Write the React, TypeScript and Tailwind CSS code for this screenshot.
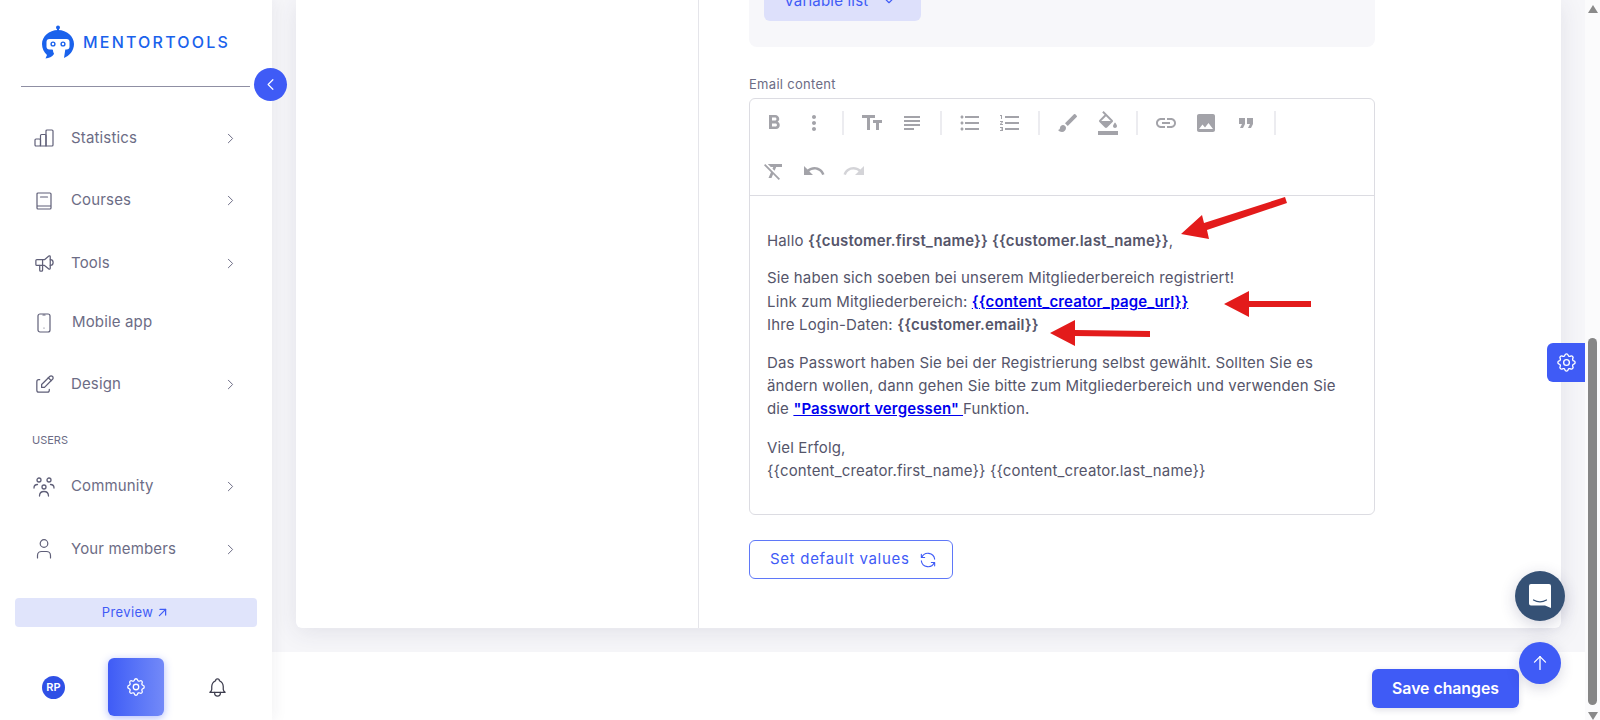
import type { ReactNode } from 'react';
import {
  MdBrush,
  MdFormatBold,
  MdFormatClear,
  MdFormatColorFill,
  MdFormatListBulleted,
  MdFormatListNumbered,
  MdFormatQuote,
  MdImage,
  MdLink,
  MdMoreVert,
  MdRedo,
  MdSubject,
  MdUndo,
} from 'react-icons/md';
import {
  TbArrowUp,
  TbArrowUpRight,
  TbBell,
  TbChevronDown,
  TbChevronLeft,
  TbChevronRight,
  TbDeviceMobile,
  TbEdit,
  TbRefresh,
  TbSettings,
  TbSpeakerphone,
} from 'react-icons/tb';

function Logo() {
  return (
    <svg width="34" height="34" viewBox="0 0 34 34" fill="none">
      <circle cx="17" cy="2.500" r="2" fill="#1a62ec" />
      <path d="M16 3h2v4h-2z" fill="#1a62ec" />
      <path
        d="M17 5C8 5 1 11.500 1 19c0 4.500 2 8.500 5 11l-1.500 3.500c3.500-.3 6.500-1.600 8.500-4.500l-1.500-6h13L23 33c5-2 10-7 10-14C33 11.500 26 5 17 5z"
        fill="#1a62ec"
      />
      <rect x="5.500" y="14" width="23" height="10.500" rx="3" fill="#fff" />
      <path d="M11.500 24h11l-2 5.500h-7z" fill="#fff" />
      <circle cx="12" cy="19" r="1.900" stroke="#1a62ec" strokeWidth="1.400" />
      <circle cx="22" cy="19" r="1.900" stroke="#1a62ec" strokeWidth="1.400" />
    </svg>
  );
}

function StatsIcon() {
  return (
    <svg width="20" height="18" viewBox="0 0 20 18" fill="none" stroke="currentColor" strokeWidth="1.200" strokeLinejoin="round">
      <rect x="1" y="10" width="5.500" height="7" rx="1" />
      <path d="M6.500 17V6.500a1 1 0 0 1 1-1h3.500a1 1 0 0 1 1 1V17z" />
      <path d="M12 17V2a1 1 0 0 1 1-1h5a1 1 0 0 1 1 1v14a1 1 0 0 1-1 1z" />
    </svg>
  );
}

function BookIcon() {
  return (
    <svg width="16" height="18" viewBox="0 0 16 18" fill="none" stroke="currentColor" strokeWidth="1.200" strokeLinecap="round">
      <path d="M1 14V2a1 1 0 0 1 1-1h12a1 1 0 0 1 1 1v12H1zm0 0v2a1 1 0 0 0 1 1h12a1 1 0 0 0 1-1v-2" />
      <path d="M4.500 5h7" />
    </svg>
  );
}

function CommunityIcon() {
  return (
    <svg width="22" height="20" viewBox="0 0 22 20" fill="none" stroke="currentColor" strokeWidth="1.300" strokeLinecap="round">
      <circle cx="6" cy="3" r="2" />
      <circle cx="16" cy="3" r="2" />
      <circle cx="11" cy="10" r="2" />
      <path d="M1 11c0-2.500 1.500-3.500 3.500-3.500M21 11c0-2.500-1.500-3.500-3.500-3.500" />
      <path d="M6.500 19c0-3 2-4.500 4.500-4.500s4.500 1.500 4.500 4.500" />
    </svg>
  );
}

function MemberIcon() {
  return (
    <svg width="16" height="20" viewBox="0 0 16 20" fill="none" stroke="currentColor" strokeWidth="1.200" strokeLinecap="round">
      <circle cx="8" cy="4.500" r="3.800" />
      <path d="M1.500 19v-2.500c0-2.500 2-4 4-4h5c2 0 4 1.500 4 4V19" />
    </svg>
  );
}

function TextSizeIcon() {
  return (
    <svg width="24" height="24" viewBox="0 0 24 24" fill="currentColor">
      <path d="M2 4v3h5v12h3V7h5V4H2zm11 5v3h3v7h3v-7h3V9h-9z" />
    </svg>
  );
}

function NavItem({ icon, label, height, chevron = true, labelGap = 'ml-[15px]' }: { icon: ReactNode; label: string; height: string; chevron?: boolean; labelGap?: string }) {
  return (
    <div className={`flex items-center pl-[32px] pr-[33px] text-[#6c6c85] ${height}`}>
      <span className="flex w-[24px] justify-center text-[#5f5f78]">{icon}</span>
      <span className={`${labelGap} flex-1 text-[15px] tracking-[0.15px]`}>{label}</span>
      {chevron && <TbChevronRight size={17} strokeWidth={1.4} />}
    </div>
  );
}

function Sidebar() {
  return (
    <aside className="relative z-10 flex h-[720px] w-[272px] shrink-0 flex-col bg-white shadow-[4px_0_12px_rgba(40,40,70,0.05)]">
      <div className="flex h-[86px] items-start pl-[41px] pt-[25px]">
        <Logo />
        <span className="ml-[8px] mt-[8px] text-[16px] font-medium leading-[19px] tracking-[2.2px] text-[#1a62ec]">MENTORTOOLS</span>
      </div>
      <div className="ml-[21px] w-[229px] border-t border-[#8f8fa3]" />
      <div className="mt-[20px] flex flex-col">
        <NavItem icon={<StatsIcon />} label="Statistics" height="h-[62px]" />
        <NavItem icon={<BookIcon />} label="Courses" height="h-[63px]" />
        <NavItem icon={<TbSpeakerphone size={23} strokeWidth={1.3} />} label="Tools" height="h-[62px]" />
        <NavItem icon={<TbDeviceMobile size={24} strokeWidth={1.2} />} label="Mobile app" height="h-[57px]" chevron={false} labelGap="ml-[16px]" />
        <NavItem icon={<TbEdit size={23} strokeWidth={1.3} />} label="Design" height="h-[67px]" />
      </div>
      <div className="mt-[15px] pl-[32px] text-[11px] leading-[14px] text-[#6c6c85]">USERS</div>
      <div className="mt-[8px] flex flex-col">
        <NavItem icon={<CommunityIcon />} label="Community" height="h-[63px]" />
        <NavItem icon={<MemberIcon />} label="Your members" height="h-[62px]" />
      </div>
      <div className="mx-[15px] mt-[18px] flex h-[29px] items-center justify-center gap-[2px] rounded-[4px] bg-[#e0e4fb] text-[13px] tracking-[0.4px] text-[#3f5bf6]">
        Preview <TbArrowUpRight size={15} />
      </div>
      <div className="mt-[31px] flex h-[58px] items-center pl-[42px]">
        <div className="flex h-[23px] w-[23px] items-center justify-center rounded-full bg-[#2f50e6] text-[11px] font-semibold text-white">RP</div>
        <div className="ml-[43px] flex h-[58px] w-[56px] items-center justify-center rounded-[6px] bg-gradient-to-r from-[#3f5bf6] to-[#7389f8] text-white shadow-[0_2px_8px_rgba(63,91,246,0.4)]">
          <TbSettings size={22} strokeWidth={1.4} />
        </div>
        <TbBell size={23} strokeWidth={1.3} className="ml-[42px] text-[#3d3d4e]" />
      </div>
      <button className="absolute left-[254px] top-[68px] flex h-[33px] w-[33px] items-center justify-center rounded-full bg-[#3f5bf6] text-white">
        <TbChevronLeft size={19} strokeWidth={1.5} />
      </button>
    </aside>
  );
}

const toolbarGroups = [
  [<MdFormatBold size={24} />, <MdMoreVert size={24} />],
  [<TextSizeIcon />, <MdSubject size={24} />],
  [<MdFormatListBulleted size={24} />, <MdFormatListNumbered size={24} />],
  [<MdBrush size={24} />, <MdFormatColorFill size={24} />],
  [<MdLink size={24} />, <MdImage size={24} />, <MdFormatQuote size={24} />],
];

function Editor() {
  return (
    <div className="w-[626px] rounded-[6px] border border-[#dcdce2]">
      <div className="border-b border-[#dcdce2] pl-[4px]">
        <div className="flex h-[48px] items-center">
          {toolbarGroups.map((group, i) => (
            <div key={i} className="mr-[8px] flex h-[24px] items-center border-r-2 border-[#ececf0] pr-[8px]">
              {group.map((icon, j) => (
                <span key={j} className="flex w-[40px] justify-center text-[#a3a3a9]">
                  {icon}
                </span>
              ))}
            </div>
          ))}
        </div>
        <div className="flex h-[48px] items-center">
          <span className="flex w-[40px] justify-center text-[#a3a3a9]"><MdFormatClear size={24} /></span>
          <span className="flex w-[40px] justify-center text-[#a3a3a9]"><MdUndo size={24} /></span>
          <span className="flex w-[40px] justify-center text-[#d4d4d8]"><MdRedo size={24} /></span>
        </div>
      </div>
      <div className="h-[318px] px-[17px] pt-[33px] text-[15px] leading-[23.4px] tracking-[0.15px] text-[#55556a]">
        <p>
          Hallo <b className="font-semibold">{'{{customer.first_name}}'} {'{{customer.last_name}}'}</b>,
        </p>
        <p className="mt-[14px]">
          Sie haben sich soeben bei unserem Mitgliederbereich registriert!
          <br />
          Link zum Mitgliederbereich: <a className="font-semibold text-[#0000ee] underline">{'{{content_creator_page_url}}'}</a>
          <br />
          Ihre Login-Daten: <b className="font-semibold">{'{{customer.email}}'}</b>
        </p>
        <p className="mt-[14px]">
          Das Passwort haben Sie bei der Registrierung selbst gewählt. Sollten Sie es ändern wollen, dann gehen Sie bitte zum Mitgliederbereich und verwenden Sie die{' '}
          <a className="font-semibold text-[#0000ee] underline">"Passwort vergessen" </a>
          Funktion.
        </p>
        <p className="mt-[15px]">
          Viel Erfolg,
          <br />
          {'{{content_creator.first_name}}'} {'{{content_creator.last_name}}'}
        </p>
      </div>
    </div>
  );
}

export default function App() {
  return (
    <div className="relative flex h-[720px] w-[1600px] overflow-hidden bg-white font-['Inter',sans-serif]">
      <Sidebar />
      <main className="flex h-[720px] w-[1313px] shrink-0 flex-col bg-[#f6f6f9]">
        <div className="h-[652px] pl-[24px] pr-[24px]">
          <div className="flex h-[628px] w-[1265px] rounded-b-[6px] bg-white shadow-[0_4px_24px_rgba(50,50,90,0.1)]">
            <div className="w-[403px] shrink-0 border-r border-[#e5e5ea]" />
            <div className="flex-1 pl-[50px]">
              <div className="flow-root h-[47px] w-[626px] rounded-b-[8px] bg-[#f7f7fa] pl-[15px]">
                <div className="-mt-[19px] flex h-[40px] w-[157px] items-center rounded-[6px] bg-[#dde0fb] pl-[20px] text-[15px] tracking-[0.2px] text-[#3f5bf6]">
                  <span>Variable list</span>
                  <TbChevronDown size={14} className="ml-[14px]" />
                </div>
              </div>
              <div className="mt-[29px] text-[13px] leading-[16px] tracking-[0.3px] text-[#6c6c85]">Email content</div>
              <div className="mt-[6px]">
                <Editor />
              </div>
              <button className="mt-[25px] flex h-[39px] w-[204px] items-center gap-[8px] rounded-[6px] border border-[#5f78f8] pl-[20px] text-[15px] tracking-[0.7px] text-[#3f5bf6]">
                Set default values <TbRefresh size={20} strokeWidth={1.3} />
              </button>
            </div>
          </div>
        </div>
        <div className="flex flex-1 items-start justify-end bg-white pr-[66px] pt-[17px]">
          <button className="flex h-[39px] w-[147px] items-center justify-center rounded-[6px] bg-[#3f5bf6] text-[15.8px] font-semibold text-white shadow-[0_2px_6px_rgba(40,40,90,0.15)]">
            Save changes
          </button>
        </div>
      </main>
      <div className="flex h-[720px] w-[15px] shrink-0 flex-col items-center bg-[#fbfbfc]">
        <div className="mt-[5px] h-0 w-0 border-x-[5px] border-b-[8px] border-x-transparent border-b-[#8a8a8a]" />
        <div className="mt-[325px] h-[367px] w-[9px] rounded-full bg-[#868686]" />
        <div className="mt-[7px] h-0 w-0 border-x-[5px] border-t-[8px] border-x-transparent border-t-[#8a8a8a]" />
      </div>

      <div className="absolute left-[1547px] top-[343px] flex h-[39px] w-[38px] items-center justify-center rounded-l-[6px] bg-[#3f5bf6] text-white">
        <TbSettings size={23} strokeWidth={1.4} />
      </div>
      <div className="absolute left-[1515px] top-[571px] flex h-[50px] w-[50px] items-center justify-center rounded-full bg-[#355175] shadow-[0_4px_16px_rgba(40,40,90,0.2)]">
        <svg width="24" height="26" viewBox="0 0 24 26">
          <path d="M3 1h18a2 2 0 0 1 2 2v22l-6-2.500H3a2 2 0 0 1-2-2V3a2 2 0 0 1 2-2z" fill="#fff" />
          <path d="M5.500 17c4 2.200 9 2.200 13 0" stroke="#355175" strokeWidth="1.200" fill="none" strokeLinecap="round" />
        </svg>
      </div>
      <div className="absolute left-[1519px] top-[642px] flex h-[42px] w-[42px] items-center justify-center rounded-full bg-[#3f5bf6] text-white shadow-[0_4px_14px_rgba(40,40,90,0.18)]">
        <TbArrowUp size={22} strokeWidth={1.4} />
      </div>
      <svg className="absolute left-0 top-0" width="1600" height="720" fill="#e31b1b">
        <polygon points="1181,234 1202,215 1204,223 1285,197 1287,203 1207,230 1209,239" />
        <polygon points="1224,304 1249,291 1249,301 1311,301 1311,307 1249,307 1249,317" />
        <polygon points="1050,333 1075,320 1075,330 1150,331 1150,337 1075,336 1075,346" />
      </svg>
    </div>
  );
}
